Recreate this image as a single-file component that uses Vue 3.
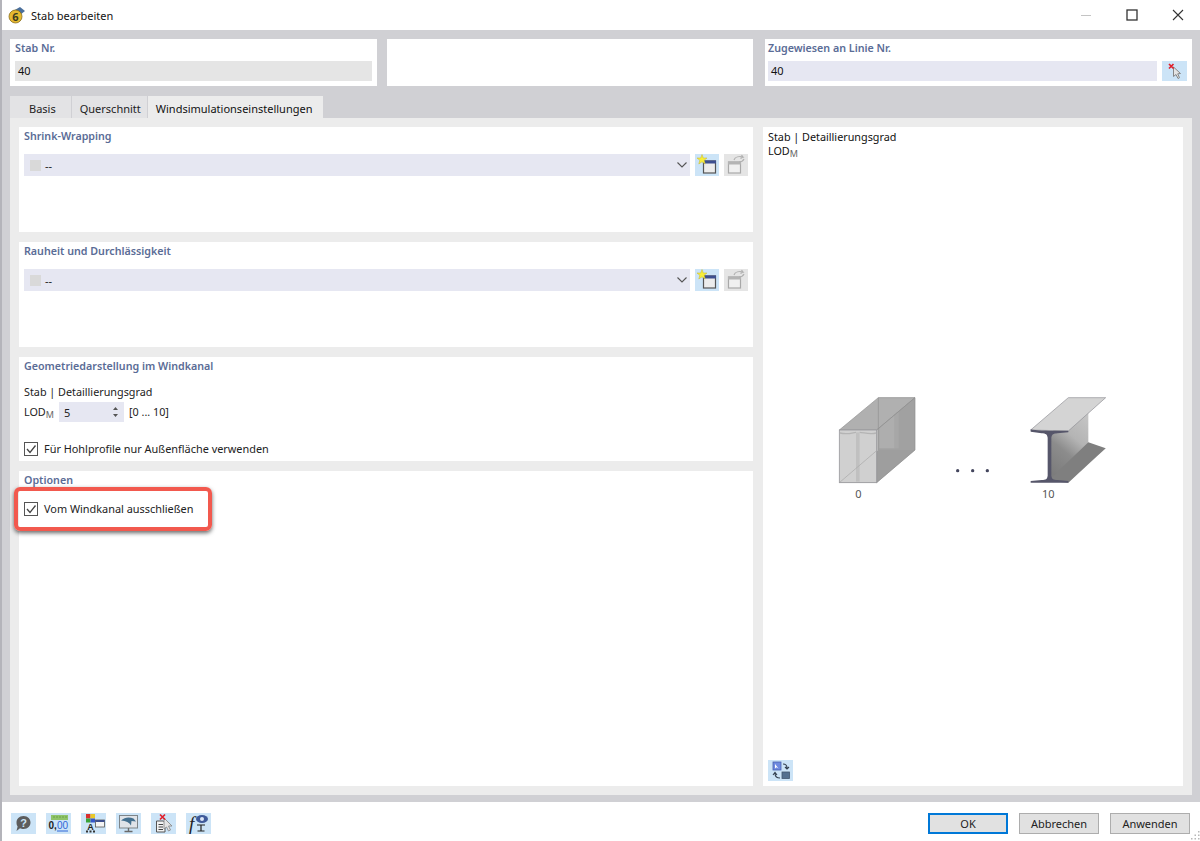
<script setup>
const panels = [
  { title: "Shrink-Wrapping" },
  { title: "Rauheit und Durchlässigkeit" },
];
const tabs = ["Basis", "Querschnitt", "Windsimulationseinstellungen"];
</script>

<template>
  <div class="window">
    <header class="titlebar">
      <svg class="app-icon" width="18" height="18" viewBox="0 0 18 18">
        <path d="M5 5 L12 1 L17 5 L12 9 Z" fill="#4a6f9c" />
        <circle cx="7.5" cy="10.5" r="6.5" fill="#e6b92f" stroke="#8a6d1c" stroke-width="0.8" />
        <text x="7.5" y="14.5" text-anchor="middle" class="app-six">6</text>
      </svg>
      <span class="title">Stab bearbeiten</span>
      <div class="win-controls">
        <svg width="14" height="14" viewBox="0 0 14 14"><path d="M2 7.5 H12" stroke="#c4c4c4" stroke-width="1" /></svg>
        <svg width="14" height="14" viewBox="0 0 14 14"><rect x="2" y="2" width="10" height="10" fill="none" stroke="#333" stroke-width="1.3" /></svg>
        <svg width="14" height="14" viewBox="0 0 14 14"><path d="M2 2 L12 12 M12 2 L2 12" stroke="#333" stroke-width="1.1" /></svg>
      </div>
    </header>

    <main class="body">
      <section class="top-row">
        <div class="top-card">
          <label class="group-label">Stab Nr.</label>
          <div class="field readonly">40</div>
        </div>
        <div class="top-card"></div>
        <div class="top-card last">
          <label class="group-label">Zugewiesen an Linie Nr.</label>
          <div class="field-row">
            <div class="field editable">40</div>
            <button class="icon-btn pick">
              <svg width="20" height="20" viewBox="0 0 20 20">
                <path d="M8.5 6 L8.5 15.5 L11 13.5 L13 17.5 L14.5 16.7 L12.7 12.8 L15.5 12.5 Z" fill="#e4e4e4" stroke="#868686" stroke-width="1" />
                <path d="M4 3 L8.5 7.5 M8.5 3 L4 7.5" stroke="#e0202c" stroke-width="1.7" />
              </svg>
            </button>
          </div>
        </div>
      </section>

      <nav class="tabs">
        <div
          v-for="(tab, i) in tabs"
          :key="tab"
          class="tab"
          :class="{ active: i === 2 }"
        >{{ tab }}</div>
      </nav>

      <section class="tab-content">
        <div class="left-col">
          <div v-for="p in panels" :key="p.title" class="panel select-panel">
            <h3 class="group-label">{{ p.title }}</h3>
            <div class="select-row">
              <div class="select">
                <span class="swatch"></span>
                <span class="select-text">--</span>
                <svg class="chevron" width="10" height="6" viewBox="0 0 10 6"><path d="M0.5 0.5 L5 5 L9.5 0.5" fill="none" stroke="#555" stroke-width="1.1" /></svg>
              </div>
              <button class="icon-btn">
                <svg width="22" height="22" viewBox="0 0 22 22">
                  <rect x="7.5" y="7" width="12" height="12" fill="#ececec" stroke="#555" stroke-width="1.2" />
                  <rect x="7" y="6.5" width="13" height="3" fill="#3d4f8f" />
                  <path d="M6 0.5 L7.3 4 L11 4 L8.2 6.3 L9.2 10 L6 7.8 L2.8 10 L3.8 6.3 L1 4 L4.7 4 Z" fill="#f7ee3a" stroke="#c7b62a" stroke-width="0.5" />
                </svg>
              </button>
              <button class="icon-btn disabled">
                <svg width="22" height="22" viewBox="0 0 22 22">
                  <rect x="3.5" y="8" width="12" height="11" fill="#f0f0f0" stroke="#a8a8a8" stroke-width="1.2" />
                  <rect x="3" y="7.5" width="13" height="3" fill="#b4b4b4" />
                  <path d="M9 6 C10 3 14 2 18 3 L16.5 1 M18 3 L15.5 4.5 M14 8 C16 8 18 7 19 5" fill="none" stroke="#b0b0b0" stroke-width="1.2" />
                </svg>
              </button>
            </div>
          </div>

          <div class="panel geometry-panel">
            <h3 class="group-label">Geometriedarstellung im Windkanal</h3>
            <p class="plain">Stab | Detaillierungsgrad</p>
            <div class="lod-row">
              <span class="plain">LOD<sub>M</sub></span>
              <div class="spinner">
                <span>5</span>
                <svg width="7" height="14" viewBox="0 0 7 14"><path d="M1 5 L3.5 2 L6 5 Z M1 9 L3.5 12 L6 9 Z" fill="#555" /></svg>
              </div>
              <span class="plain">[0 ... 10]</span>
            </div>
            <label class="check">
              <span class="box"><svg width="12" height="12" viewBox="0 0 12 12"><path d="M2 6 L5 9.5 L10.5 2.5" fill="none" stroke="#444" stroke-width="1.3" /></svg></span>
              Für Hohlprofile nur Außenfläche verwenden
            </label>
          </div>

          <div class="panel options-panel">
            <h3 class="group-label">Optionen</h3>
            <label class="check">
              <span class="box"><svg width="12" height="12" viewBox="0 0 12 12"><path d="M2 6 L5 9.5 L10.5 2.5" fill="none" stroke="#444" stroke-width="1.3" /></svg></span>
              Vom Windkanal ausschließen
            </label>
            <div class="highlight"></div>
          </div>
        </div>

        <aside class="preview-panel">
          <p class="plain black">Stab | Detaillierungsgrad</p>
          <p class="plain black">LOD<sub>M</sub></p>
          <div class="diagram">
            <svg width="300" height="120" viewBox="0 0 900 360">
              <defs>
                <linearGradient id="web" x1="0.8" y1="0" x2="0.25" y2="1">
                  <stop offset="0" stop-color="#cfcfcf" />
                  <stop offset="0.5" stop-color="#b4b4b4" />
                  <stop offset="0.7" stop-color="#8c8c8c" />
                  <stop offset="1" stop-color="#7c7c7c" />
                </linearGradient>
              </defs>
              <!-- box: profile 0 -->
              <rect x="175" y="38" width="110" height="157" fill="#a2a2a2" />
              <rect x="178" y="45" width="46" height="145" fill="#c4c4c4" />
              <rect x="224" y="45" width="12" height="145" fill="#b2b2b2" />
              <path d="M58 135 L175 38 L285 38 L170 135 Z" fill="#b0b0b0" stroke="#8f8f8f" stroke-width="2" />
              <path d="M58 293 L175 195 L285 195 L170 293 Z" fill="#9b9b9b" />
              <path d="M170 135 L285 38 L285 195 L170 293 Z" fill="#a0a0a0" fill-opacity="0.6" stroke="#8f8f8f" stroke-width="2" />
              <rect x="58" y="135" width="112" height="158" fill="#d0d0d0" stroke="#9a9a9e" stroke-width="2.5" />
              <rect x="108" y="142" width="11" height="148" fill="#c0c0c0" />
              <path d="M60 144 C85 150 100 142 108 142 M119 142 C130 142 150 150 168 144" fill="none" stroke="#b4b4b4" stroke-width="4" />
              <path d="M58 293 L170 197" stroke="#a8a8a8" stroke-width="2" />
              <path d="M175 38 V195" stroke="#8f8f8f" stroke-width="2" />
              <!-- I-beam: profile 10 -->
              <path d="M690 145 L805 48 L805 185 L857 190 L745 293 L690 288 Z" fill="url(#web)" />
              <path d="M690 282 L805 172 L857 190 L745 290 Z" fill="#7f7f7f" />
              <path d="M632 135 L745 38 L857 38 L745 138 Z" fill="#d4d4d4" stroke="#8e8e94" stroke-width="2" />
              <path d="M632 133 C650 138 720 138 745 137 L745 142 L712 145 C700 146 696 148 694 158 L694 272 C696 283 700 284 712 285 L745 288 L745 293 L632 293 L632 288 L665 285 C678 284 681 283 683 272 L683 158 C681 148 678 146 665 145 L632 140 Z" fill="#56566a" />
              <circle cx="413" cy="257" r="5" fill="#44465e" />
              <circle cx="458" cy="257" r="5" fill="#44465e" />
              <circle cx="502" cy="257" r="5" fill="#44465e" />
              <text x="115" y="338" text-anchor="middle" class="dia-label">0</text>
              <text x="685" y="338" text-anchor="middle" class="dia-label">10</text>
            </svg>
          </div>
          <button class="icon-btn sync">
            <svg width="22" height="22" viewBox="0 0 22 22">
              <rect x="3" y="2" width="8" height="8" fill="#6f8be0" stroke="#4a62b0" stroke-width="0.8" />
              <path d="M5 4 L5 8.5 L6.5 7.2 L8.5 8.5 Z" fill="#fff" />
              <rect x="12" y="12" width="7.5" height="6.5" fill="#54708f" stroke="#43566e" stroke-width="0.8" />
              <path d="M13 4 C15.5 4 17 5 17 8 M15 7 L17 9 L19 7" fill="none" stroke="#33404f" stroke-width="1.1" />
              <path d="M10 18 C7 18 5 17 5 13 M3 15 L5 12.5 L7 15" fill="none" stroke="#33404f" stroke-width="1.1" />
            </svg>
          </button>
        </aside>
      </section>
    </main>

    <footer class="footer">
      <div class="tool-icons">
        <button class="icon-btn tool">
          <svg width="21" height="21" viewBox="0 0 21 21">
            <path d="M10.5 3 C15 3 17.5 6 17.5 9.5 C17.5 13 15 16 10.5 16 C9 16 8 15.7 7 15.2 L3.5 18 L4.6 13.5 C3.8 12.4 3.5 11 3.5 9.5 C3.5 6 6 3 10.5 3 Z" fill="#5d5d5d" />
            <text x="10.5" y="13.5" text-anchor="middle" class="help-mark">?</text>
          </svg>
        </button>
        <button class="icon-btn tool">
          <svg width="23" height="21" viewBox="0 0 23 21">
            <rect x="4" y="2" width="17" height="5" fill="#8fc46a" />
            <path d="M7 3 V5 M10 3 V5 M13 3 V5 M16 3 V5 M19 3 V5" stroke="#5f9a40" stroke-width="0.8" />
            <text x="1.5" y="16" class="zero">0,</text>
            <text x="10" y="16" class="zero blue">00</text>
            <path d="M10 18 H21" stroke="#2f66d8" stroke-width="1" />
          </svg>
        </button>
        <button class="icon-btn tool">
          <svg width="23" height="21" viewBox="0 0 23 21">
            <rect x="4" y="1" width="4.5" height="4.5" fill="#d92f2f" />
            <rect x="8.5" y="1" width="4.5" height="4.5" fill="#e8c82a" />
            <rect x="4" y="5.5" width="4.5" height="4" fill="#3aa33a" />
            <rect x="8.5" y="5.5" width="4.5" height="4" fill="#3557c9" />
            <text x="8.5" y="16.5" text-anchor="middle" class="tiny-a">A</text>
            <path d="M4 18.5 H6 M7.5 18.5 H9.5 M11 18.5 H13" stroke="#333" stroke-width="2" />
            <rect x="13.5" y="7" width="9" height="7" fill="#f4f4f4" stroke="#555" stroke-width="0.8" />
            <rect x="13.5" y="7" width="9" height="2" fill="#3d4f8f" />
          </svg>
        </button>
        <button class="icon-btn tool">
          <svg width="23" height="21" viewBox="0 0 23 21">
            <rect x="2.5" y="2.5" width="18" height="12.5" fill="#dfe3e8" stroke="#7d8488" stroke-width="1" />
            <path d="M4 7.5 C8 3.5 13 4 16.5 5.5 L19 8.5 L14.5 8 L14 12.5 C12.5 9.5 9 8 4 7.5 Z" fill="#44708f" />
            <path d="M11.5 15 V18 M7.5 18.5 H15.5" stroke="#6a6a6a" stroke-width="1.4" />
          </svg>
        </button>
        <button class="icon-btn tool">
          <svg width="23" height="21" viewBox="0 0 23 21">
            <path d="M4.5 8 H11.5 L13 10 V19 H4.5 Z" fill="#f2f2f2" stroke="#555" stroke-width="1" />
            <path d="M6.5 11.5 H11 M6.5 14 H11 M6.5 16.5 H11" stroke="#444" stroke-width="1" />
            <path d="M12 5 L12 16 L14.5 14 L16.5 18 L18.5 17 L16.5 13 L20 13 Z" fill="#e4e4e4" stroke="#8a8a8a" stroke-width="0.9" />
            <path d="M8 1.5 L13 6.5 M13 1.5 L8 6.5" stroke="#e0202c" stroke-width="1.7" />
          </svg>
        </button>
        <button class="icon-btn tool">
          <svg width="23" height="21" viewBox="0 0 23 21">
            <text x="2" y="17" class="fx">f</text>
            <path d="M10 12 H18 M14 12 V17.5 M10.5 18 H17.5" stroke="#222" stroke-width="1.2" />
            <ellipse cx="15" cy="6" rx="6" ry="4" fill="#3f5a9a" />
            <circle cx="15" cy="6" r="2" fill="#dce6f7" />
          </svg>
        </button>
      </div>
      <div class="actions">
        <button class="btn primary">OK</button>
        <button class="btn">Abbrechen</button>
        <button class="btn">Anwenden</button>
      </div>
      <svg class="grip" width="11" height="11" viewBox="0 0 11 11">
        <path d="M9 1 h1.5 v1.5 h-1.5 Z M5.5 4.5 h1.5 v1.5 h-1.5 Z M9 4.5 h1.5 v1.5 h-1.5 Z M2 8 h1.5 v1.5 h-1.5 Z M5.5 8 h1.5 v1.5 h-1.5 Z M9 8 h1.5 v1.5 h-1.5 Z" fill="#b8b8b8" />
      </svg>
    </footer>
  </div>
</template>

<style>
html,
body {
  margin: 0;
  background: #fff;
}
</style>

<style scoped>
.window {
  width: 1200px;
  height: 841px;
  display: flex;
  flex-direction: column;
  box-sizing: border-box;
  border-left: 2px solid #b4b4ba;
  background: #fff;
  font-family: "Noto Sans", "Open Sans", sans-serif;
  font-size: 11px;
  color: #222;
  overflow: hidden;
  position: relative;
}

.titlebar {
  height: 30px;
  flex: none;
  display: flex;
  align-items: center;
  padding-left: 6px;
}

.app-icon {
  margin-right: 5px;
}

.app-six {
  font-size: 11px;
  font-weight: 700;
  fill: #3b3b20;
}

.title {
  font-size: 11px;
  color: #111;
}

.win-controls {
  margin-left: auto;
  display: flex;
  gap: 32px;
  padding-right: 15px;
}

.body {
  flex: none;
  height: 772px;
  box-sizing: border-box;
  background: #d0d0d4;
  padding: 9px 8px 7px 8px;
  display: flex;
  flex-direction: column;
}

.top-row {
  display: flex;
  gap: 10px;
  height: 47px;
  flex: none;
}

.top-card {
  background: #fff;
  width: 367px;
  box-sizing: border-box;
  padding: 2px 5px 0;
}

.top-card:nth-child(2) {
  width: 366px;
}

.top-card.last {
  margin-left: 2px;
  width: 427px;
  padding: 2px 5px 0 3px;
}

.group-label {
  display: block;
  margin: 0;
  font-size: 10.7px;
  font-weight: 600;
  line-height: 15px;
  color: #5a6c96;
}

.field {
  height: 20px;
  line-height: 20px;
  margin-top: 5px;
  padding-left: 3px;
  font-size: 11px;
  color: #111;
}

.field.readonly {
  background: #e5e5e5;
}

.field.editable {
  background: #e6e7f2;
  flex: 1;
  margin: 0;
}

.field-row {
  display: flex;
  gap: 5px;
  margin-top: 5px;
}

.icon-btn {
  width: 24px;
  height: 22px;
  padding: 0;
  border: 0;
  background: #cce4f7;
  display: flex;
  align-items: center;
  justify-content: center;
  flex: none;
}

.icon-btn.pick {
  width: 25px;
  height: 20px;
}

.icon-btn.disabled {
  background: #e5e5e5;
}

.tabs {
  display: flex;
  height: 22px;
  margin-top: 10px;
  gap: 1px;
  flex: none;
}

.tab {
  background: #e3e3e5;
  padding: 0 6px 0 8px;
  line-height: 26px;
  font-size: 11px;
  color: #222;
}

.tab:first-child {
  padding: 0 15px 0 19px;
}

.tab.active {
  background: #ececec;
  padding: 0 11px 0 8px;
  color: #111;
}

.tab-content {
  flex: 1;
  min-height: 0;
  background: #ececec;
  padding: 9px;
  display: flex;
  gap: 10px;
}

.left-col {
  width: 734px;
  display: flex;
  flex-direction: column;
  gap: 10px;
}

.panel {
  background: #fff;
  box-sizing: border-box;
  padding: 2px 5px 0;
  position: relative;
}

.select-panel {
  height: 105px;
}

.select-row {
  display: flex;
  align-items: center;
  margin-top: 10px;
  gap: 5px;
}

.select {
  flex: 1;
  height: 22px;
  background: #e6e7f2;
  display: flex;
  align-items: center;
  padding: 0 3px 0 6px;
  box-sizing: border-box;
}

.swatch {
  width: 11px;
  height: 11px;
  background: #d9d9d9;
  margin-right: 4px;
}

.select-text {
  font-size: 11px;
}

.chevron {
  margin-left: auto;
}

.geometry-panel {
  height: 104px;
}

.plain {
  margin: 0;
  font-size: 10.8px;
  line-height: 14px;
  color: #222;
}

.plain.black {
  color: #111;
}

.plain sub {
  font-size: 9px;
  vertical-align: -2px;
  line-height: 0;
  color: #666;
}

.geometry-panel > .plain {
  margin-top: 11px;
}

.lod-row {
  display: flex;
  align-items: center;
  margin-top: 3px;
  gap: 5px;
}

.lod-row .plain:first-child {
  width: 30px;
}

.spinner {
  width: 65px;
  height: 20px;
  background: #e6e7f2;
  display: flex;
  align-items: center;
  justify-content: space-between;
  padding: 0 5px;
  box-sizing: border-box;
}

.check {
  display: flex;
  align-items: center;
  gap: 6px;
  font-size: 10.9px;
  color: #222;
}

.geometry-panel .check {
  margin-top: 19px;
}

.box {
  width: 12px;
  height: 12px;
  border: 1px solid #555;
  display: flex;
  align-items: center;
  justify-content: center;
  background: #fff;
}

.options-panel {
  flex: 1;
}

.options-panel .check {
  margin-top: 13px;
}

/* red marker drawn over the screenshot */
.highlight {
  position: absolute;
  left: -5px;
  top: 16px;
  width: 198px;
  height: 44px;
  box-sizing: border-box;
  border: 4px solid #f2594e;
  border-radius: 6px;
  box-shadow: 0 2px 4px rgba(0, 0, 0, 0.6);
}

.preview-panel {
  flex: 1;
  background: #fff;
  padding: 3px 5px 5px 5px;
  display: flex;
  flex-direction: column;
}

.diagram {
  flex: 1;
  display: flex;
  align-items: center;
  padding-left: 52px;
  padding-bottom: 28px;
}

.dia-label {
  font-size: 33px;
  fill: #555;
}

.icon-btn.sync {
  width: 25px;
  height: 21px;
}

.footer {
  flex: 1;
  display: flex;
  align-items: center;
  padding: 3px 10px 0 9px;
  position: relative;
}

.tool-icons {
  display: flex;
  gap: 10px;
}

.icon-btn.tool {
  width: 25px;
  height: 21px;
}

.help-mark {
  font-size: 11px;
  font-weight: 700;
  fill: #cce4f7;
}

.zero {
  font-size: 10px;
  font-weight: 700;
  fill: #222;
}

.zero.blue {
  fill: #2f66d8;
  font-weight: 400;
}

.tiny-a {
  font-size: 9px;
  font-weight: 700;
  fill: #222;
}

.fx {
  font-family: "Liberation Serif", serif;
  font-style: italic;
  font-size: 19px;
  fill: #222;
}

.actions {
  margin-left: auto;
  display: flex;
  gap: 11px;
}

.btn {
  width: 80px;
  height: 21px;
  padding: 0;
  background: #e1e1e1;
  border: 1px solid #adadad;
  font-family: inherit;
  font-size: 11px;
  color: #222;
}

.btn.primary {
  border: 2px solid #0078d7;
}

.grip {
  position: absolute;
  right: 0;
  bottom: 0;
}
</style>
